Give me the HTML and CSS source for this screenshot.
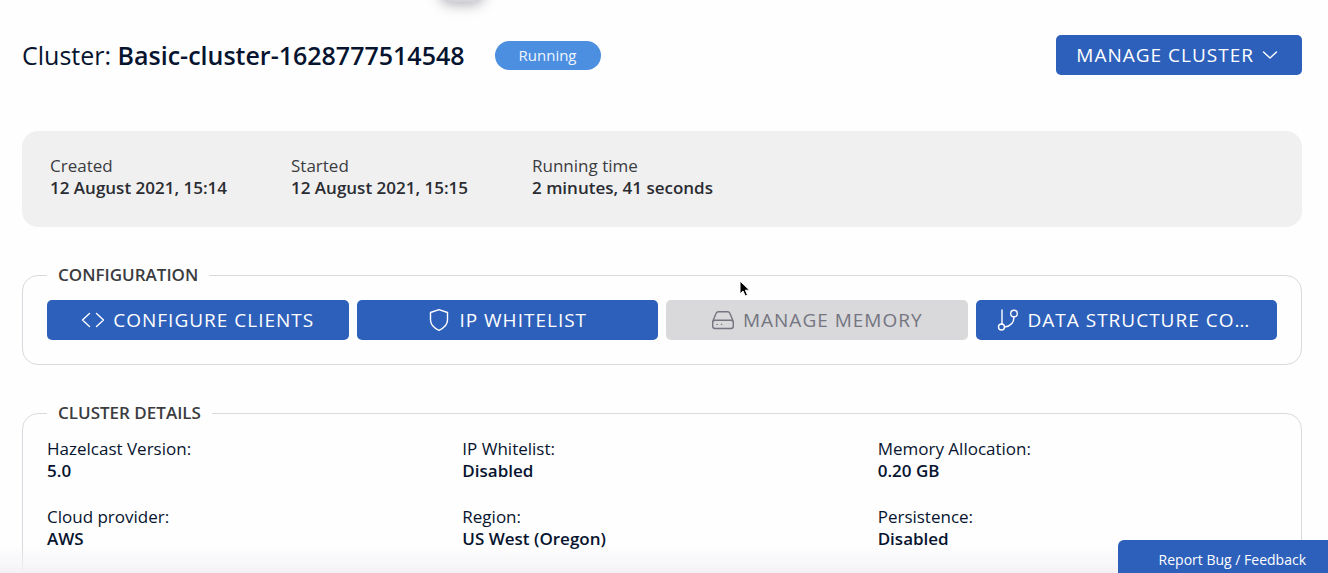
FILE: index.html
```html
<!DOCTYPE html>
<html lang="en">
<head>
<meta charset="utf-8">
<meta name="viewport" content="width=device-width, initial-scale=1">
<title>Cluster: Basic-cluster-1628777514548</title>
<link rel="stylesheet" href="styles.css">
</head>
<body>
<div class="floating-handle"></div>
<main class="page">
  <header class="page-header">
    <h1 class="title">Cluster: <strong class="title-name">Basic-cluster-1628777514548</strong></h1>
    <span class="status">Running</span>
    <button class="button button-manage" type="button">
      <span class="button-label">Manage Cluster</span>
      <svg class="chevron" viewBox="0 0 16 16" aria-hidden="true"><path d="M1.500 5 8 11l6.500-6"/></svg>
    </button>
  </header>

  <dl class="summary">
    <div class="item"><dt>Created</dt><dd>12 August 2021, 15:14</dd></div>
    <div class="item"><dt>Started</dt><dd>12 August 2021, 15:15</dd></div>
    <div class="item"><dt>Running time</dt><dd>2 minutes, 41 seconds</dd></div>
  </dl>

  <fieldset class="panel">
    <legend class="panel-title">Configuration</legend>
    <div class="actions">
      <button class="button" type="button">
        <svg class="icon" viewBox="0 0 24 24" aria-hidden="true"><path d="M8.500 5.500 1.500 12l7 6.500M15.500 5.500l7 6.500-7 6.500"/></svg>
        <span class="button-label">Configure Clients</span>
      </button>
      <button class="button" type="button">
        <svg class="icon" viewBox="0 0 24 24" aria-hidden="true"><path d="M12 1.700 20.500 4.500V12c0 4.500-3.500 8-8.500 10.300C7 20 3.500 16.500 3.500 12V4.500z"/></svg>
        <span class="button-label">IP Whitelist</span>
      </button>
      <button class="button" type="button" disabled>
        <svg class="icon" viewBox="0 0 24 24" aria-hidden="true"><path d="M1.700 13.500 5 5.600Q5.700 3.800 7.500 3.800h9Q18.300 3.800 19 5.600l3.300 7.900M4 12.200h16q2.300 0 2.300 2.300V18q0 2.500-2.300 2.500H4Q1.700 20.500 1.700 18v-3.500q0-2.300 2.300-2.300zM6 16.400h.2M10.500 16.400h.2"/></svg>
        <span class="button-label">Manage Memory</span>
      </button>
      <button class="button" type="button">
        <svg class="icon" viewBox="0 0 24 24" aria-hidden="true"><path d="M6 2v14.500"/><circle cx="5.500" cy="19" r="3"/><circle cx="18" cy="5.500" r="3.300"/><path d="M18 8.800c0 6-3.500 9.500-9.500 10.200"/></svg>
        <span class="button-label">Data Structure Configuration</span>
      </button>
    </div>
  </fieldset>

  <fieldset class="panel panel-details">
    <legend class="panel-title">Cluster Details</legend>
    <dl class="details">
      <div class="item"><dt>Hazelcast Version:</dt><dd>5.0</dd></div>
      <div class="item"><dt>IP Whitelist:</dt><dd>Disabled</dd></div>
      <div class="item"><dt>Memory Allocation:</dt><dd>0.20 GB</dd></div>
      <div class="item"><dt>Cloud provider:</dt><dd>AWS</dd></div>
      <div class="item"><dt>Region:</dt><dd>US West (Oregon)</dd></div>
      <div class="item"><dt>Persistence:</dt><dd>Disabled</dd></div>
    </dl>
  </fieldset>
</main>
<div class="bottom-fade"></div>
<button class="feedback" type="button">Report Bug / Feedback</button>
<svg class="cursor" viewBox="0 0 12 18" aria-hidden="true"><path d="M1 1v13l3-3 2.200 5 2.300-1L6.400 10.200h4.200z"/></svg>
</body>
</html>
```
FILE: styles.css
```css
* { box-sizing: border-box; }

body {
  margin: 0;
  height: 100vh;
  overflow: hidden;
  background: #fefefe;
  color: #07142f;
  font-family: "Open Sans", "Noto Sans", sans-serif;
  font-size: 17px;
  line-height: 22px;
}

dl, dd, h1 { margin: 0; }

.page { padding: 35px 26px 0 22px; }

.page-header {
  display: flex;
  align-items: center;
  gap: 30px;
  margin-bottom: 56px;
}

.title {
  font-size: 25px;
  font-weight: 400;
  line-height: 40px;
}

.title-name { font-weight: 600; }

.status {
  padding: 4px 24px;
  border-radius: 15px;
  background: #4c8ee0;
  color: #f0f6ff;
  font-size: 15px;
  line-height: 21px;
}

.button {
  display: flex;
  align-items: center;
  justify-content: center;
  gap: 8px;
  min-width: 0;
  height: 40px;
  padding: 0 20px;
  border: 0;
  border-radius: 5px;
  background: #2d60ba;
  color: #fff;
  font-family: inherit;
  font-size: 19px;
  letter-spacing: 1px;
  text-transform: uppercase;
}

.button:disabled { background: #d9d9dc; color: #74757f; }

.button-label {
  overflow: hidden;
  text-overflow: ellipsis;
  white-space: nowrap;
}

.button-manage { margin-left: auto; padding-right: 24px; }

.icon, .chevron {
  flex: none;
  width: 24px;
  height: 24px;
  fill: none;
  stroke: currentColor;
  stroke-width: 1.4;
  stroke-linecap: round;
  stroke-linejoin: round;
}

.chevron { width: 16px; height: 16px; }

.summary {
  display: flex;
  gap: 64px;
  padding: 24px 28px 28px;
  border-radius: 16px;
  background: #f0f0f1;
  color: #3b3c40;
}

.summary dd { color: #2b2c31; }

.item dd { font-weight: 600; }

.panel {
  min-width: 0;
  margin: 36px 0 0;
  padding: 13px 24px 24px;
  border: 1px solid #d9dadf;
  border-radius: 16px;
}

.panel-title {
  padding: 0 11px;
  color: #3b3c40;
  font-weight: 600;
  line-height: 24px;
  text-transform: uppercase;
}

.actions {
  display: grid;
  grid-template-columns: repeat(4, minmax(0, 1fr));
  gap: 8px;
}

.panel-details { padding-bottom: 48px; }

.details {
  display: grid;
  grid-template-columns: repeat(3, minmax(0, 1fr));
  gap: 24px 16px;
}

.floating-handle {
  position: absolute;
  top: -38px;
  left: 440px;
  width: 44px;
  height: 40px;
  border-radius: 12px;
  box-shadow: 0 2px 14px #a8a8b2;
  background: #d4d4da;
}

.bottom-fade {
  position: fixed;
  right: 0;
  bottom: 0;
  left: 0;
  height: 26px;
  background: linear-gradient(rgba(240, 238, 243, 0), #f3f1f5);
}

.feedback {
  position: fixed;
  right: 0;
  bottom: 0;
  padding: 9px 22px 2px 41px;
  border: 0;
  border-radius: 6px 0 0 0;
  background: #2d60ba;
  color: #fff;
  font-family: inherit;
  font-size: 14px;
  line-height: 22px;
}

.cursor {
  position: absolute;
  top: 280px;
  left: 739px;
  width: 12px;
  height: 18px;
  fill: #000;
  stroke: #fff;
}
```
